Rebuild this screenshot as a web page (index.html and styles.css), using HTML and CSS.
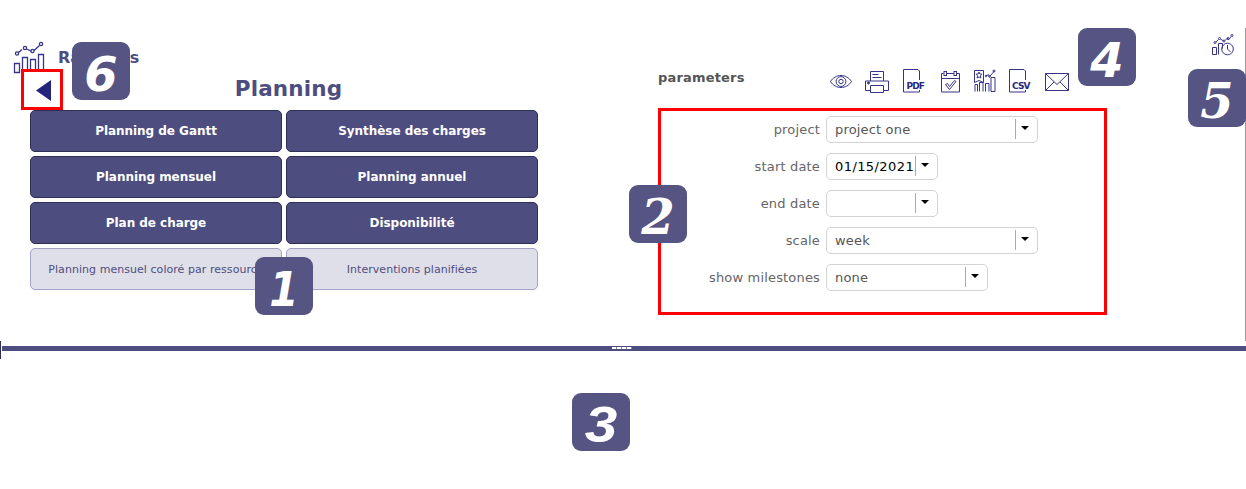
FILE: index.html
```
<!DOCTYPE html>
<html lang="fr">
<head>
<meta charset="utf-8">
<title>Planning</title>
<link rel="stylesheet" href="styles.css">
</head>
<body>
<main class="top">
  <section class="reports">
    <header class="reports-head">
      <svg class="chart-icon" width="34" height="34" viewBox="0 0 34 34"><path d="M2.500 22.500h5v9h-5zM10.500 16.500h5v15h-5zM18.500 18.500h5v13h-5zM26.500 13.500h5v18h-5zM6.500 11.500l3.500-3M14.500 8l4.500 2M22 9.500l5.500-5"/><circle cx="5" cy="12.500" r="1.600"/><circle cx="13" cy="7" r="1.600"/><circle cx="20.500" cy="10" r="1.600"/><circle cx="29" cy="3" r="1.600"/></svg>
      <h1 class="reports-title">Rapports</h1>
    </header>
    <h2 class="category">Planning</h2>
    <div class="report-grid">
      <button class="report">Planning de Gantt</button><button class="report">Synthèse des charges</button>
      <button class="report">Planning mensuel</button><button class="report">Planning annuel</button>
      <button class="report">Plan de charge</button><button class="report">Disponibilité</button>
      <button class="report light">Planning mensuel coloré par ressource</button><button class="report light">Interventions planifiées</button>
    </div>
  </section>
  <section class="params">
    <header class="params-head">
      <h2 class="params-title">parameters</h2>
      <div class="tools">
        <svg width="22" height="26" viewBox="0 0 22 26"><path d="M.5 13.500C5.500 5.500 16.500 5.500 21.500 13.500C16.500 21.500 5.500 21.500.5 13.500z"/><circle cx="11" cy="13.500" r="4.900"/><circle cx="11" cy="13.500" r="2.200"/></svg>
        <svg width="24" height="26" viewBox="0 0 24 26"><path d="M5.500 13V3.500h13V13M5.500 22.500h-5v-9.500h23v9.500h-5M5.500 17.500h13v7h-13zM7.500 6.500h6M7.500 9.500h9"/><circle class="dot" cx="3.500" cy="15" r="1"/></svg>
        <svg width="25" height="26" viewBox="0 0 25 26"><path d="M17.500 12V3L16 1.500H1.500v22.500h16V22"/><text x="4.500" y="20.500" textLength="18.500">PDF</text></svg>
        <svg width="21" height="26" viewBox="0 0 21 26"><path d="M3.500 5.500H1.500v18.500h18V5.500H17M1.500 10.500H19.500M7 5.500h7"/><rect x="4" y="3.500" width="2.500" height="4"/><rect x="14" y="3.500" width="2.500" height="4"/><path d="M5.500 16.500l2-1 2 3 5-6 1.500 1L9.500 21.500z"/></svg>
        <svg width="21" height="26" viewBox="0 0 21 26"><path d="M.5 2.500h9v12l-4.500-2-4.500 2zM1 23.500v-7h2.500v7M5.500 23.500v-9h3.500v9M11.500 23.500v-8h3.500v8M17 23.500V9.500h4v14zM12 8l2.500-1.500 1 2 5-5.500"/><path d="M5 4l.9 2 2.100.2-1.500 1.500.4 2.300L5 8.900 3.100 10l.4-2.300L2 6.200 4.100 6z"/><circle cx="12" cy="8" r=".8"/><circle cx="15.500" cy="8.500" r=".8"/><circle cx="20" cy="3" r="1"/></svg>
        <svg width="24" height="26" viewBox="0 0 24 26"><path d="M17.500 12V3L16 1.500H1.500v22.500h16V22"/><text x="4" y="20.500" textLength="18.500">CSV</text></svg>
        <svg width="24" height="26" viewBox="0 0 24 26"><path d="M.5 5.500h23v17H.5zM.5 5.500L12 16.500l11.500-11M.5 22.500L9 14M23.500 22.500L15 14"/></svg>
      </div>
    </header>
    <form class="form">
      <label class="label">project</label><div class="field wide"><span class="value">project one</span><span class="drop"></span></div>
      <label class="label">start date</label><div class="field date"><span class="value">01/15/2021</span><span class="drop"></span></div>
      <label class="label">end date</label><div class="field date"><span class="value"></span><span class="drop"></span></div>
      <label class="label">scale</label><div class="field wide"><span class="value">week</span><span class="drop"></span></div>
      <label class="label">show milestones</label><div class="field medium"><span class="value">none</span><span class="drop"></span></div>
    </form>
  </section>
  <aside class="side">
    <svg class="history" width="22" height="23" viewBox="0 0 22 23"><path d="M.5 13.500h4v7h-4zM6.500 20.500v-11h4v5M4 8l2.500-2.500M8.500 5l3 2M13 6.500l2-2 2 1 2-3"/><circle cx="3" cy="8.500" r="1"/><circle cx="7.500" cy="4.500" r="1"/><circle cx="12" cy="7" r="1"/><circle cx="16" cy="4.500" r="1"/><circle cx="20" cy="1.500" r="1"/><circle cx="15.500" cy="15" r="5.800"/><path d="M15.500 11v4l3 3"/></svg>
  </aside>
</main>
<div class="splitter"><span class="grip"></span></div>
<div class="start-line"></div>
<div class="back"><svg width="16" height="22" viewBox="0 0 16 22"><path d="M15 0v21L0 10.500z"/></svg></div>
<div class="frame"></div>
<div class="badge one"><span class="digit">1</span></div>
<div class="badge two"><span class="digit">2</span></div>
<div class="badge three"><span class="digit">3</span></div>
<div class="badge four"><span class="digit">4</span></div>
<div class="badge five"><span class="digit">5</span></div>
<div class="badge six"><span class="digit">6</span></div>
</body>
</html>
```
FILE: styles.css
```
* { box-sizing: border-box; }
body {
  margin: 0;
  height: 489px;
  position: relative;
  overflow: hidden;
  background: #fff;
  font-family: "DejaVu Sans", sans-serif;
  color: #4e4d7f;
}
h1, h2 { margin: 0; }
svg { display: block; fill: none; stroke: #35348a; stroke-width: 1; overflow: visible; }
svg text { font: bold 9px "DejaVu Sans", sans-serif; fill: #29287d; stroke: none; }
.dot { fill: #35348a; }

.top { display: flex; height: 346px; }
.reports { width: 658px; padding: 41px 0 0 12px; }
.reports-head { display: flex; height: 34px; gap: 12px; }
.chart-icon { stroke-width: 1.300; }
.reports-title { font-size: 16px; line-height: 34px; letter-spacing: -0.1px; }
.category { width: 553px; height: 35px; line-height: 27px; font-size: 21.500px; letter-spacing: 0.15px; text-align: center; }
.report-grid {
  display: grid;
  grid-template-columns: 252px 252px;
  grid-auto-rows: 42px;
  gap: 4px;
  margin-left: 18px;
}
.report {
  padding: 0;
  border: 1px solid #2f2e54;
  border-radius: 5px;
  background: #4e4d7f;
  color: #fff;
  font: bold 12px "DejaVu Sans", sans-serif;
  letter-spacing: -0.04px;
}
.report.light {
  border-color: #a3a2c8;
  background: #dfdfe9;
  color: #4e4d7f;
  font-weight: normal;
  font-size: 11px;
  letter-spacing: 0.05px;
  white-space: nowrap;
}

.params { width: 554px; padding-top: 68px; }
.params-head { display: flex; height: 48px; }
.params-title { width: 172px; font-size: 13px; line-height: 19px; letter-spacing: 0.18px; color: #555; }
.tools { display: flex; gap: 13px; }
.form {
  display: grid;
  grid-template-columns: 162px 1fr;
  grid-auto-rows: 27px;
  row-gap: 10px;
  column-gap: 6px;
  font-size: 13px;
  line-height: 27px;
  letter-spacing: 0.17px;
  color: #656565;
}
.label { text-align: right; }
.field {
  display: flex;
  justify-content: space-between;
  border: 1px solid #d3d3d3;
  border-radius: 5px;
  padding: 2px 0 3px 8px;
  line-height: 22px;
  color: #555;
}
.wide { width: 212px; }
.medium { width: 162px; }
.date { width: 112px; color: #000; letter-spacing: 0.42px; }
.value { white-space: nowrap; }
.drop { flex: none; width: 22px; height: 20px; border-left: 1px solid #aaa; padding: 7px 0 0 5px; }
.drop::before { content: ""; display: block; width: 0; border: 4px solid transparent; border-top-color: #000; border-bottom: 0; }

.side { width: 34px; height: 313px; margin-top: 28px; padding-top: 6px; border-right: 1px solid #999; }
.splitter { height: 5px; margin-left: 2px; display: flex; justify-content: center; background: #4e4d7f; }
.grip { width: 20px; height: 2px; margin: 1px 0 0 -4px; background: repeating-linear-gradient(90deg, #fff 0 4px, #8b8a91 4px 5px); }

/* Numbered callouts over the interface */
.start-line { position: absolute; left: 0; top: 341px; width: 1px; height: 18px; background: #2f2e54; }
.back { position: absolute; left: 21px; top: 69px; width: 42px; height: 41px; padding: 8px 0 0 12px; border: 3px solid #f00; background: #fff; }
.back path { fill: #25247b; stroke: none; }
.frame { position: absolute; left: 658px; top: 108px; width: 449px; height: 207px; border: 3px solid #f00; }
.badge {
  position: absolute;
  width: 58px;
  height: 58px;
  padding-top: 3px;
  border-radius: 9px;
  background: #565482;
  color: #fff;
  text-align: center;
  font: italic bold 48px/58px "DejaVu Sans", sans-serif;
}
.digit { display: block; }
.one { left: 255px; top: 257px; }
.one .digit { transform: scaleX(0.88); }
.two { left: 629px; top: 185px; font-family: "DejaVu Serif", serif; }
.three { left: 572px; top: 393px; font-family: "Liberation Sans", sans-serif; font-size: 50px; }
.three .digit { transform: scaleX(1.17); }
.four { left: 1078px; top: 28px; }
.five { left: 1188px; top: 69px; font-family: "DejaVu Serif", serif; }
.six { left: 72px; top: 42px; }
```
